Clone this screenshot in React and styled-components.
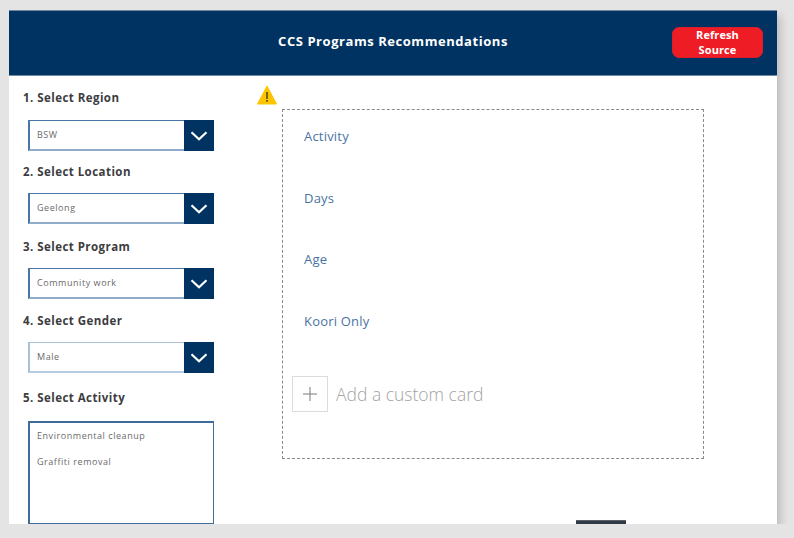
import styled, { createGlobalStyle } from "styled-components";

const GlobalStyle = createGlobalStyle`
  html, body {
    margin: 0;
    padding: 0;
    height: 538px;
    overflow: hidden;
    background: #e4e4e4;
    font-family: "Open Sans", "Liberation Sans", sans-serif;
  }
`;

const Screen = styled.div`
  width: 794px;
  height: 538px;
  padding: 10px 17px 14px 9px;
  box-sizing: border-box;
`;

const Canvas = styled.div`
  position: relative;
  height: 514px;
  background: #fff;
  box-shadow: 3px 6px 9px rgba(0, 0, 0, 0.2);
  clip-path: inset(0 -14px 0 0);
  overflow: hidden;
`;

const Header = styled.header`
  height: 66px;
  box-sizing: border-box;
  background: #003361;
  border-top: 1px solid #6f88a3;
  border-bottom: 1px solid #6d8cab;
  display: flex;
  align-items: center;
  justify-content: flex-end;
  padding: 0 14px 2px 0;
  position: relative;
`;

const Title = styled.h1`
  position: absolute;
  left: 0;
  right: 0;
  margin: -2px 0 0;
  text-align: center;
  font-size: 13px;
  font-weight: 700;
  letter-spacing: 0.55px;
  color: #fff;
`;

const RefreshButton = styled.button`
  width: 91px;
  height: 31px;
  padding: 0 0 8px;
  border: 1px solid #d8202c;
  border-radius: 7px;
  background: #ee1c25;
  color: #fff;
  font-family: inherit;
  font-size: 11px;
  font-weight: 700;
  line-height: 15px;
  letter-spacing: 0.1px;
  position: relative;
  z-index: 1;
`;

const RefreshLabel = styled.span`
  display: block;
  margin-top: -1px;
`;

const Body = styled.div`
  display: flex;
`;

const Sidebar = styled.aside`
  width: 248px;
  flex: none;
  padding: 14px 0 0 14px;
  box-sizing: border-box;
`;

const Field = styled.div`
  height: ${(p) => p.$height}px;
`;

const Label = styled.div`
  font-size: 11.5px;
  font-weight: 700;
  line-height: 16px;
  letter-spacing: 0.45px;
  color: #3c3c41;
  margin-bottom: ${(p) => p.$gap}px;
`;

const Select = styled.div`
  width: 186px;
  height: 31px;
  margin-left: 5px;
  box-sizing: border-box;
  display: flex;
  border: 1px solid ${(p) => p.$border || "#4a76a5"};
  border-left-width: 2px;
  border-bottom-color: ${(p) => p.$bottom || "#8eacc9"};
  border-bottom-width: 2px;
`;

const SelectValue = styled.div`
  flex: 1;
  padding-left: 7px;
  font-size: 9px;
  line-height: 27px;
  letter-spacing: 0.55px;
  color: #6a6a6a;
`;

const Chevron = styled.div`
  width: 30px;
  margin: -1px -1px -2px 0;
  background: #003361;
  display: flex;
  align-items: center;
  justify-content: center;
`;

const ListBox = styled.div`
  width: 186px;
  height: 104px;
  margin-left: 5px;
  box-sizing: border-box;
  border: 1px solid #3f6c9b;
  border-width: 2px 1px 2px 2px;
  padding-left: 7px;
`;

const ListItem = styled.div`
  font-size: 9px;
  height: 26px;
  line-height: 26px;
  letter-spacing: 0.55px;
  color: #6a6a6a;
`;

const Main = styled.main`
  flex: 1;
  position: relative;
  padding: 34px 0 0 25px;
`;

const WarningIcon = styled.svg`
  position: absolute;
  left: 0;
  top: 9px;
`;

const CardArea = styled.div`
  width: 422px;
  height: 350px;
  box-sizing: border-box;
  border: 1px dashed #8a8a8a;
  margin-top: -1px;
  padding: 16px 0 0 9px;
`;

const CardRow = styled.div`
  height: 61.6px;
  padding-left: 12px;
  font-size: 13px;
  line-height: 21px;
  letter-spacing: 0.2px;
  color: #4a74a2;
`;

const AddCard = styled.div`
  display: flex;
  align-items: center;
  gap: 8px;
  margin-top: 4px;
`;

const AddButton = styled.div`
  width: 36px;
  height: 36px;
  box-sizing: border-box;
  border: 1px solid #dcdcdc;
  display: flex;
  align-items: center;
  justify-content: center;
`;

const AddText = styled.span`
  font-size: 17.5px;
  font-weight: 300;
  color: #a3a3a3;
`;

const BottomTab = styled.div`
  position: absolute;
  left: 567px;
  bottom: 0;
  width: 50px;
  height: 4px;
  background: #2f3947;
  border-top: 1px solid #5a5f68;
  box-sizing: border-box;
`;

const selects = [
  { label: "1. Select Region", value: "BSW", height: 74, gap: 14 },
  { label: "2. Select Location", value: "Geelong", height: 75, gap: 13 },
  { label: "3. Select Program", value: "Community work", height: 74, gap: 13 },
  { label: "4. Select Gender", value: "Male", height: 77, gap: 13, border: "#a9c0d8", bottom: "#b7cbe0" },
];

const cards = ["Activity", "Days", "Age", "Koori Only"];

const ChevronIcon = () => (
  <svg width="18" height="10" viewBox="0 0 18 10">
    <path d="M1.5 1.2 L9 8.2 L16.5 1.2" fill="none" stroke="#fff" strokeWidth="2.2" />
  </svg>
);

export default function App() {
  return (
    <>
      <GlobalStyle />
      <Screen>
        <Canvas>
          <Header>
            <Title>CCS Programs Recommendations</Title>
            <RefreshButton>
              <RefreshLabel>
                Refresh
                <br />
                Source
              </RefreshLabel>
            </RefreshButton>
          </Header>
          <Body>
            <Sidebar>
              {selects.map((s) => (
                <Field key={s.label} $height={s.height}>
                  <Label $gap={s.gap}>{s.label}</Label>
                  <Select $border={s.border} $bottom={s.bottom}>
                    <SelectValue>{s.value}</SelectValue>
                    <Chevron>
                      <ChevronIcon />
                    </Chevron>
                  </Select>
                </Field>
              ))}
              <Label $gap={15}>5. Select Activity</Label>
              <ListBox>
                <ListItem>Environmental cleanup</ListItem>
                <ListItem>Graffiti removal</ListItem>
              </ListBox>
            </Sidebar>
            <Main>
              <WarningIcon width="20" height="20" viewBox="0 0 20 20">
                <path d="M10 1 L19.5 19 L0.5 19 Z" fill="#fdc500" stroke="#fdc500" strokeLinejoin="round" />
                <rect x="9.2" y="7" width="1.6" height="7" fill="#5a4a10" />
                <rect x="9.2" y="15" width="1.6" height="1.8" fill="#5a4a10" />
              </WarningIcon>
              <CardArea>
                {cards.map((c) => (
                  <CardRow key={c}>{c}</CardRow>
                ))}
                <AddCard>
                  <AddButton>
                    <svg width="16" height="16" viewBox="0 0 16 16">
                      <path d="M8 1 V15 M1 8 H15" stroke="#7a7a7a" strokeWidth="1" />
                    </svg>
                  </AddButton>
                  <AddText>Add a custom card</AddText>
                </AddCard>
              </CardArea>
            </Main>
          </Body>
          <BottomTab />
        </Canvas>
      </Screen>
    </>
  );
}
